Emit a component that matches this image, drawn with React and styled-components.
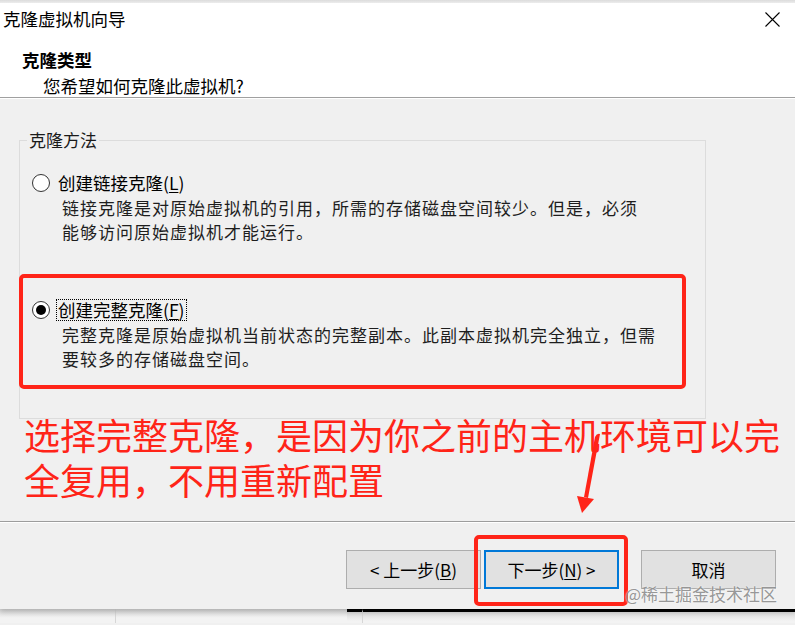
import React from "react";
import styled, { createGlobalStyle } from "styled-components";

const GlobalStyle = createGlobalStyle`
  html, body {
    margin: 0;
    padding: 0;
    background: #f0f0f0;
  }
  body {
    font-family: "Noto Sans CJK SC", "Noto Sans", sans-serif;
    color: #000;
  }
`;

const Window = styled.div`
  position: relative;
  width: 795px;
  height: 625px;
  overflow: hidden;
  background: #f0f0f0;
`;

const TopEdge = styled.div`
  height: 3px;
  background: linear-gradient(#dcdcdc, #ececec);
`;

const Header = styled.header`
  background: #fff;
  height: 94px;
  border-bottom: 1px solid #a0a0a0;
  box-shadow: 0 1px 0 #fff;
`;

const TitleBar = styled.div`
  display: flex;
  align-items: center;
  justify-content: space-between;
  height: 32px;
  padding: 0 15px 0 3px;
  font-size: 17.5px;
  line-height: 22px;
`;

const Heading = styled.div`
  margin-top: 14px;
  padding-left: 22px;
  font-size: 17.5px;
  font-weight: 700;
  line-height: 22px;
`;

const SubHeading = styled.div`
  margin-top: 4px;
  padding-left: 43px;
  font-size: 17.5px;
  line-height: 22px;
`;

const Body = styled.main`
  height: 424px;
  padding-top: 33px;
  box-sizing: border-box;
  border-bottom: 1px solid #a0a0a0;
`;

const GroupBox = styled.fieldset`
  margin: 0 89px 0 19px;
  padding: 0 12px 47px;
  border: 1px solid #dcdcdc;
  min-width: 0;
`;

const Legend = styled.legend`
  margin-left: -5px;
  padding: 0 2px;
  font-size: 17px;
  line-height: 18px;
  color: #1a1a1a;
`;

const Option = styled.div`
  margin-top: ${(p) => p.$gap}px;
`;

const OptionRow = styled.div`
  display: flex;
  align-items: center;
  height: 22px;
`;

const Radio = styled.span`
  position: relative;
  width: 18px;
  height: 18px;
  box-sizing: border-box;
  border: 1px solid #333;
  border-radius: 50%;
  background: #fff;
  flex-shrink: 0;

  &::after {
    content: "";
    position: absolute;
    inset: 3px;
    border-radius: 50%;
    background: ${(p) => (p.$checked ? "#000" : "transparent")};
  }
`;

const OptionLabel = styled.span`
  margin-left: 6px;
  padding: 0 1px;
  border: 1px dotted ${(p) => (p.$focused ? "#000" : "transparent")};
  font-size: 17.5px;
  line-height: 20px;
  white-space: nowrap;

  u {
    text-decoration-thickness: 1px;
    text-underline-offset: 2px;
  }
`;

const Description = styled.p`
  margin: 2px 0 0 30px;
  font-size: 17px;
  letter-spacing: 1px;
  line-height: 24px;
  color: #1e1e1e;
  white-space: nowrap;
`;

const Note = styled.p`
  margin: -7px 0 0 24px;
  font-size: 36px;
  line-height: 45px;
  color: #ff2418;
  white-space: nowrap;
`;

const Footer = styled.footer`
  display: flex;
  justify-content: flex-end;
  align-items: flex-start;
  height: 87px;
  box-sizing: border-box;
  padding: 27px 19px 0 0;
  border-top: 1px solid #fff;
  box-shadow: 0 3px 5px rgba(0, 0, 0, 0.18);
  position: relative;
`;

const Button = styled.button`
  width: 135px;
  height: 39px;
  margin-left: ${(p) => p.$gap || 0}px;
  background: #e1e1e1;
  border: ${(p) => (p.$default ? "2px solid #0078d7" : "1px solid #adadad")};
  font-family: "Noto Sans CJK SC", "Noto Sans", sans-serif;
  font-size: 17px;
  line-height: 20px;
  color: #000;
  padding: 0;

  u {
    text-decoration-thickness: 1px;
    text-underline-offset: 2px;
  }
`;

const BackStrip = styled.div`
  display: flex;
  height: 14px;
`;

const BackPart = styled.div`
  width: ${(p) => p.$w}px;
  flex-shrink: 0;
  box-sizing: border-box;
  border-right: ${(p) => (p.$line ? "1px solid #d6d6d6" : "none")};
  border-top: ${(p) => (p.$dark ? "3px solid #000" : "none")};
  background: linear-gradient(#d8d8d8, #f3f3f3 9px);
`;

const RedFrame = styled.div`
  position: absolute;
  left: ${(p) => p.$x}px;
  top: ${(p) => p.$y}px;
  width: ${(p) => p.$w}px;
  height: ${(p) => p.$h}px;
  box-sizing: border-box;
  border: 4px solid #ff2418;
  border-radius: 5px;
  pointer-events: none;
`;

const Arrow = styled.svg`
  position: absolute;
  left: 570px;
  top: 428px;
`;

const Watermark = styled.div`
  position: absolute;
  right: 18px;
  top: 583px;
  font-size: 17px;
  line-height: 22px;
  color: rgba(125, 125, 125, 0.8);
  text-shadow: 0 0 2px #fff;
  white-space: nowrap;
`;

function CloseIcon() {
  return (
    <svg width="15" height="15" viewBox="0 0 15 15">
      <path d="M0.5 0.5 L14.5 14.5 M14.5 0.5 L0.5 14.5" stroke="#000" strokeWidth="1.1" />
    </svg>
  );
}

function App() {
  return (
    <>
      <GlobalStyle />
      <Window>
        <TopEdge />
        <Header>
          <TitleBar>
            <span>克隆虚拟机向导</span>
            <CloseIcon />
          </TitleBar>
          <Heading>克隆类型</Heading>
          <SubHeading>您希望如何克隆此虚拟机?</SubHeading>
        </Header>

        <Body>
          <GroupBox>
            <Legend>克隆方法</Legend>
            <Option $gap={23}>
              <OptionRow>
                <Radio />
                <OptionLabel>
                  创建链接克隆(<u>L</u>)
                </OptionLabel>
              </OptionRow>
              <Description>
                链接克隆是对原始虚拟机的引用，所需的存储磁盘空间较少。但是，必须
                <br />
                能够访问原始虚拟机才能运行。
              </Description>
            </Option>
            <Option $gap={55}>
              <OptionRow>
                <Radio $checked />
                <OptionLabel $focused>
                  创建完整克隆(<u>F</u>)
                </OptionLabel>
              </OptionRow>
              <Description>
                完整克隆是原始虚拟机当前状态的完整副本。此副本虚拟机完全独立，但需
                <br />
                要较多的存储磁盘空间。
              </Description>
            </Option>
          </GroupBox>
          <Note>
            选择完整克隆，是因为你之前的主机环境可以完
            <br />
            全复用，不用重新配置
          </Note>
        </Body>

        <Footer>
          <Button>
            &lt; 上一步(<u>B</u>)
          </Button>
          <Button $default $gap={3}>
            下一步(<u>N</u>) &gt;
          </Button>
          <Button $gap={22}>取消</Button>
        </Footer>

        <BackStrip>
          <BackPart $w={116} $line />
          <BackPart $w={231} />
          <BackPart $w={16} $dark $line />
          <BackPart $w={432} $dark />
        </BackStrip>

        <RedFrame $x={19} $y={274} $w={667} $h={115} />
        <RedFrame $x={474} $y={535} $w={154} $h={71} />
        <Arrow width="40" height="90" viewBox="0 0 40 90">
          <path d="M25 9 Q27 5 30 6 L18 70 L14 69 Z" fill="#ff2418" />
          <polygon points="7,68 24,71 12,85" fill="#ff2418" />
        </Arrow>
        <Watermark>@稀土掘金技术社区</Watermark>
      </Window>
    </>
  );
}

export default App;
